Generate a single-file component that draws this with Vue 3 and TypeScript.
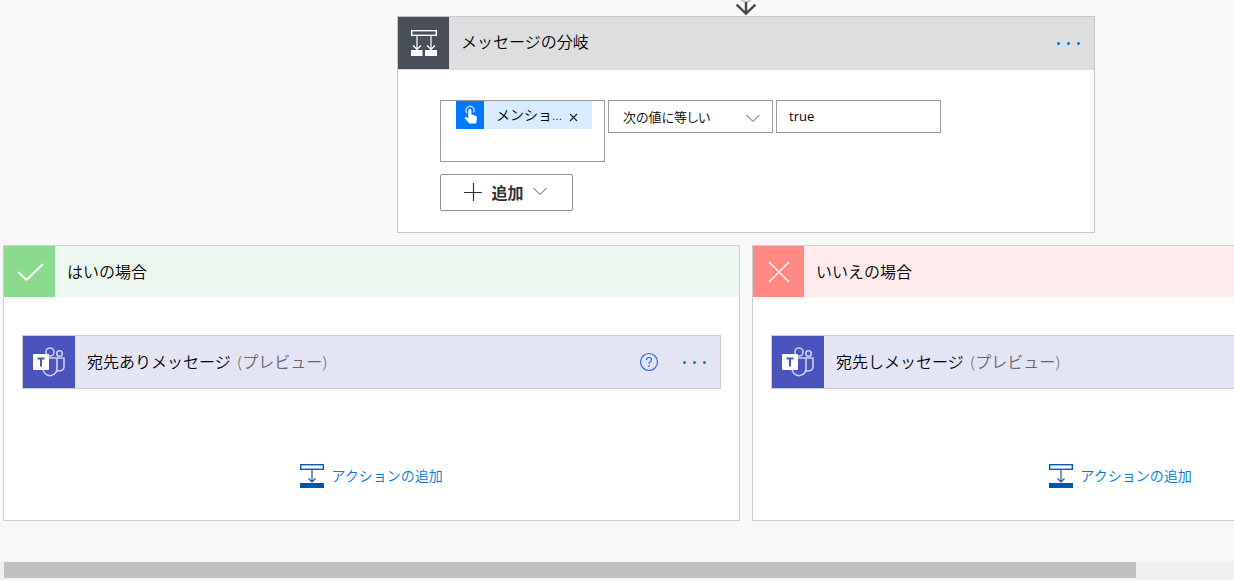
<script setup lang="ts">
import { ref, computed } from 'vue'

interface Branch {
  id: string
  title: string
  kind: 'yes' | 'no'
  action: string
}

const branches: Branch[] = [
  { id: 'yes', title: 'はいの場合', kind: 'yes', action: '宛先ありメッセージ' },
  { id: 'no', title: 'いいえの場合', kind: 'no', action: '宛先しメッセージ' },
]

const operator = ref('equals')
const compareValue = ref('true')
const visibleShare = ref(92)
const thumbStyle = computed(() => ({ width: `${visibleShare.value}%` }))
</script>

<template>
  <main class="designer">
    <div class="viewport">
      <div class="canvas">
        <svg class="connector" viewBox="0 0 24 17" aria-hidden="true">
          <path d="M7 0Q12 4 17 0" fill="none" stroke="#c4c4c4" stroke-width="2" />
          <path d="M12 2V14M2 5L12 14.500L22 5" fill="none" stroke="#484848" stroke-width="2.600" />
        </svg>

        <section class="condition">
          <header class="condition-head">
            <span class="tile slate">
              <svg width="28" height="28" viewBox="0 0 28 28" fill="none" stroke="#fff" aria-hidden="true">
                <rect x="1.700" y="1.700" width="24.600" height="4.600" stroke-width="1.400" />
                <path d="M7 6.500V20M3 16.500L7 20.500L11 16.500M21 6.500V20M17 16.500L21 20.500L25 16.500" stroke-width="1.200" />
                <path d="M1 21H12.500V27H1ZM15 21H27V27H15Z" fill="#fff" stroke="none" />
              </svg>
            </span>
            <h1 class="title">メッセージの分岐</h1>
            <button class="more" type="button" aria-label="メニュー"><i></i><i></i><i></i></button>
          </header>
          <div class="condition-body">
            <div class="row">
              <div class="operand">
                <span class="token">
                  <span class="token-icon">
                    <svg width="28" height="28" viewBox="0 0 28 28" aria-hidden="true">
                      <path d="M11 12A4 4 0 1 1 17.500 11.500" fill="none" stroke="#b8dcff" stroke-width="1.400" />
                      <path d="M12.300 9.500Q12.300 7.800 13.900 7.800Q15.400 7.800 15.400 9.500V13.600L19.800 14.800Q21.200 15.300 21 17L20.200 22.500H13.300L8.800 17.600Q8.300 16.800 9 16.200Q10.200 15.600 11.200 16.400L12.300 17.300Z" fill="#fff" />
                    </svg>
                  </span>
                  <span class="token-text">メンショ...</span>
                  <button class="token-x" type="button" aria-label="削除">
                    <svg width="9" height="9" viewBox="0 0 9 9" aria-hidden="true"><path d="M1 1L8 8M8 1L1 8" stroke="#222" stroke-width="1.200" /></svg>
                  </button>
                </span>
              </div>
              <div class="select-box">
                <select v-model="operator" aria-label="演算子">
                  <option value="equals">次の値に等しい</option>
                </select>
                <svg class="chevron" width="14" height="9" viewBox="0 0 14 9" aria-hidden="true"><path d="M.5 1L7 7.500L13.500 1" fill="none" stroke="#555" /></svg>
              </div>
              <input v-model="compareValue" class="value" type="text" aria-label="値" />
            </div>
            <button class="add" type="button">
              <svg width="18" height="18" viewBox="0 0 18 18" aria-hidden="true"><path d="M0 9.500H18M9.500 0V18" stroke="#333" stroke-width="1.200" /></svg>
              <span>追加</span>
              <svg width="14" height="9" viewBox="0 0 14 9" aria-hidden="true"><path d="M.5 1L7 7.500L13.500 1" fill="none" stroke="#555" /></svg>
            </button>
          </div>
        </section>

        <div class="branches">
          <section v-for="b in branches" :key="b.id" class="branch">
            <header class="branch-head" :class="b.kind">
              <span class="tile">
                <svg v-if="b.kind === 'yes'" width="28" height="28" viewBox="0 0 28 28" aria-hidden="true"><path d="M2 14L10.500 22L27 6" fill="none" stroke="#fff" stroke-width="1.800" /></svg>
                <svg v-else width="28" height="28" viewBox="0 0 28 28" aria-hidden="true"><path d="M4 4L24 24M24 4L4 24" stroke="#fff" stroke-width="1.300" /></svg>
              </span>
              <h2 class="title">{{ b.title }}</h2>
            </header>
            <div class="branch-body">
              <article class="action">
                <span class="tile teams">
                  <svg width="34" height="34" viewBox="0 0 34 34" fill="none" aria-hidden="true">
                    <g stroke="#cdd0f2" stroke-width="1.600">
                      <circle cx="18" cy="7" r="4" />
                      <circle cx="27.500" cy="8.500" r="2.800" />
                      <path d="M17 13H25V22.500A7 7 0 0 1 11 24.500" />
                      <path d="M25 13H32V21.500Q32 26.500 25 26" />
                    </g>
                    <rect x="1" y="9" width="16" height="16" rx="1" fill="#fff" />
                    <path d="M5.500 13.500H12.500M9 13.500V21.500" stroke="#4b53bc" stroke-width="2" />
                  </svg>
                </span>
                <h3 class="title">{{ b.action }} <span class="preview">(プレビュー)</span></h3>
                <button class="help" type="button" aria-label="ヘルプ">
                  <svg width="20" height="20" viewBox="0 0 20 20" fill="none" stroke="#2a66f5" aria-hidden="true">
                    <circle cx="10" cy="10" r="8.500" stroke-width="1.200" />
                    <path d="M7.500 8Q7.500 5.500 10 5.500Q12.500 5.500 12.500 7.700Q12.500 9 11.200 9.800Q10 10.600 10 12" stroke-width="1.200" />
                    <path d="M10 13.300V14.700" stroke-width="1.400" />
                  </svg>
                </button>
                <button class="more" type="button" aria-label="メニュー"><i></i><i></i><i></i></button>
              </article>
              <button class="add-action" type="button">
                <svg width="24" height="24" viewBox="0 0 24 24" fill="none" stroke="#0b5cad" aria-hidden="true">
                  <rect x=".7" y=".7" width="22.600" height="4.600" stroke-width="1.400" />
                  <path d="M12 5.500V18M8.500 14.500L12 18L15.500 14.500" stroke-width="1.200" />
                  <rect y="19" width="24" height="5" fill="#0058ad" stroke="none" />
                </svg>
                <span>アクションの追加</span>
              </button>
            </div>
          </section>
        </div>
      </div>
    </div>
    <div class="scroll-track"><div class="scroll-thumb" :style="thumbStyle"></div></div>
  </main>
</template>

<style>
body {
  margin: 0;
  background: #f8f8f8;
}
</style>

<style scoped>
* {
  box-sizing: border-box;
}
.designer {
  min-height: 100vh;
  display: flex;
  flex-direction: column;
  overflow: hidden;
  background: #f8f8f8;
  color: #000;
  font-family: "Open Sans", "Noto Sans CJK JP", sans-serif;
  font-size: 16px;
  font-weight: 350;
}
button,
input,
select {
  font: inherit;
  color: inherit;
  margin: 0;
}
button {
  padding: 0;
  border: 0;
  background: none;
  cursor: pointer;
}
svg {
  display: block;
  flex: none;
}
.viewport {
  flex: 1;
  overflow: hidden;
}
.canvas {
  width: max-content;
  padding: 0 3px;
  display: flex;
  flex-direction: column;
  align-items: center;
}
.connector {
  width: 24px;
  height: 16px;
}
.condition {
  width: 698px;
  border: 1px solid #c8c8c8;
  background: #fff;
}
.condition-head,
.branch-head,
.action {
  display: flex;
  align-items: center;
}
.condition-head {
  padding-bottom: 1px;
  background: #dddee0;
}
.tile {
  flex: none;
  width: 51px;
  height: 51px;
  display: flex;
  align-items: center;
  justify-content: center;
}
.slate {
  height: 52px;
  background: #484f58;
}
.title {
  flex: 1;
  margin: 0;
  padding-left: 12px;
  font-size: 16px;
  line-height: 24px;
  font-weight: inherit;
}
.condition-head .title {
  padding-bottom: 2px;
}
.more {
  display: flex;
  gap: 7px;
  padding: 8px 0;
  margin-right: 14px;
}
.more i {
  width: 3px;
  height: 3px;
  border-radius: 50%;
  background: #0078d4;
}
.condition-body {
  padding: 30px 42px 21px;
}
.row {
  display: flex;
  align-items: flex-start;
  gap: 3px;
}
.operand,
.select-box,
.value {
  width: 165px;
  border: 1px solid #999;
  background: #fff;
}
.operand {
  height: 62px;
  padding-left: 15px;
}
.token {
  width: 136px;
  height: 28px;
  display: flex;
  align-items: center;
  background: #d9ebff;
}
.token-icon {
  background: #0077ff;
}
.token-text {
  padding-left: 12px;
  font-size: 14px;
  line-height: 24px;
}
.token-x {
  padding-top: 5px;
  margin-left: 7px;
}
.select-box {
  height: 33px;
  display: flex;
  align-items: center;
}
.select-box select {
  flex: 1;
  min-width: 0;
  height: 31px;
  padding: 0 0 0 14px;
  border: 0;
  appearance: none;
  background: none;
  font-size: 13px;
  font-feature-settings: "palt";
}
.chevron {
  margin: 4px 12px 0 0;
}
.value {
  height: 33px;
  padding: 0 12px 2px;
  border-radius: 0;
  font-size: 13px;
  font-weight: 400;
}
.add {
  height: 37px;
  width: 133px;
  margin: 12px 0 0;
  padding: 0 2px 2px 0;
  display: flex;
  align-items: center;
  justify-content: center;
  gap: 9px;
  border: 1px solid #8f8f8f;
  border-radius: 2px;
  font-weight: 700;
  color: #323130;
}
.branches {
  display: flex;
  gap: 12px;
  margin-top: 12px;
}
.branch {
  width: 737px;
  border: 1px solid #cfcfcf;
  background: #fff;
}
.branch-head.yes {
  background: #ecf8ef;
}
.branch-head.yes .tile {
  background: #8bdb8d;
}
.branch-head.no {
  background: #ffebeb;
}
.branch-head.no .tile {
  background: #fd8982;
}
.branch-body {
  padding: 38px 18px 31px;
  display: flex;
  flex-direction: column;
  align-items: center;
}
.action {
  align-self: stretch;
  border: 1px solid #cbcbd0;
  background: #e4e5f4;
}
.teams {
  width: 52px;
  height: 52px;
  background: #4b53bc;
}
.preview {
  margin-left: 3px;
  color: #666;
}
.help {
  margin-right: 24px;
}
.add-action {
  display: flex;
  align-items: center;
  gap: 7px;
  margin-top: 74px;
  font-size: 14px;
  line-height: 26px;
  color: #0078d4;
}
.scroll-track {
  height: 19px;
  padding: 1px 0 2px 4px;
  background: #f0f0f0;
}
.scroll-thumb {
  height: 16px;
  background: #c1c1c1;
}
</style>
